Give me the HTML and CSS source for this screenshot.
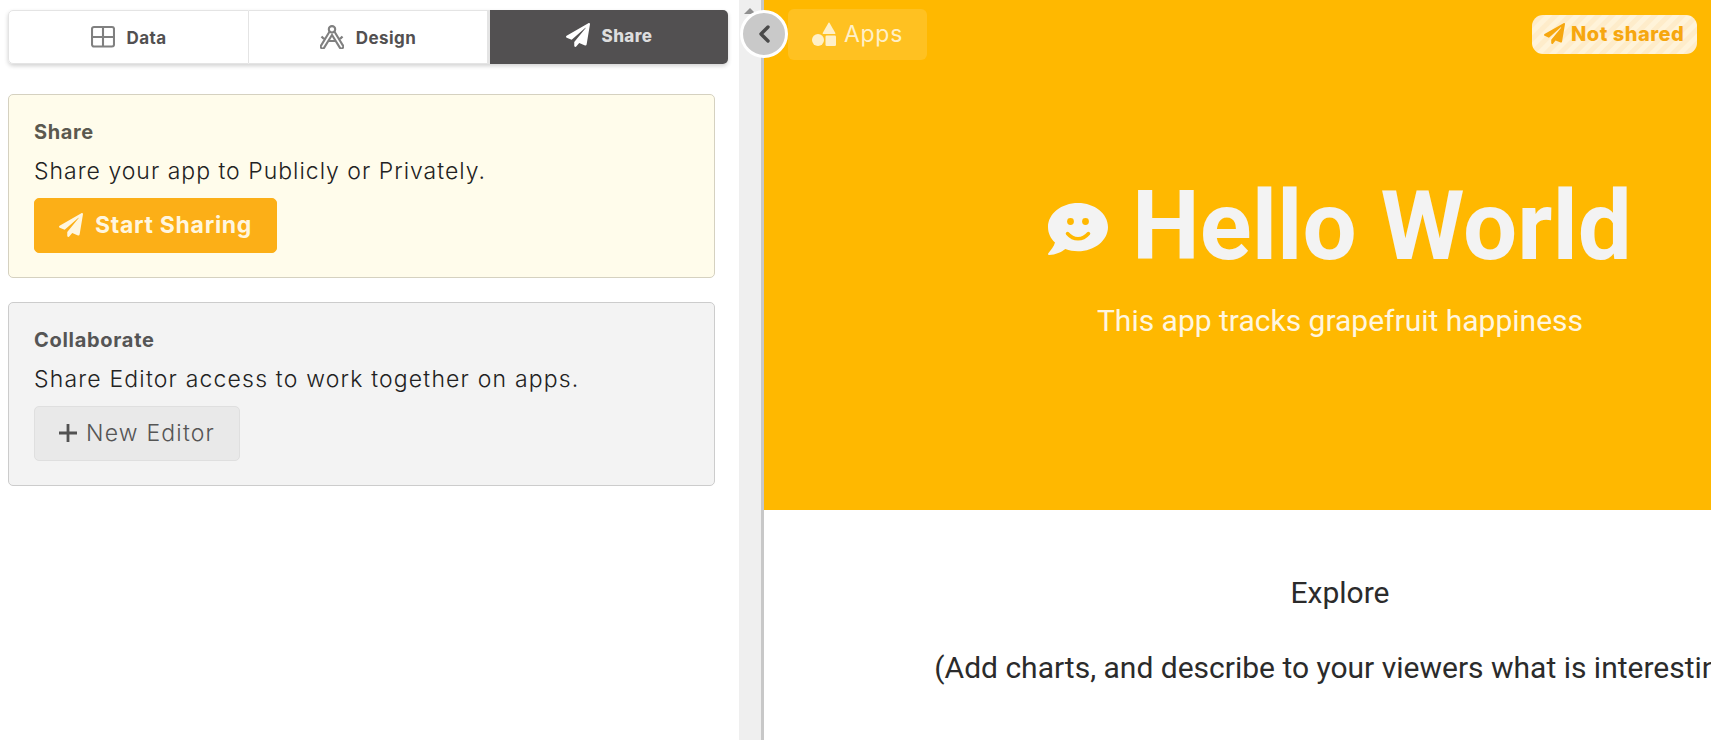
FILE: index.html
```
<!DOCTYPE html>
<html lang="en">
<head>
<meta charset="utf-8">
<title>Share</title>
<link rel="stylesheet" href="styles.css">
</head>
<body>
<svg class="defs" aria-hidden="true">
  <symbol id="plane" viewBox="0 0 512 512"><path d="M476 3.200L12.500 270.600c-18.100 10.400-15.800 35.600 2.200 43.200L121 358.400l287.300-253.200c5.500-4.900 13.300 2.600 8.600 8.300L176 407v80.500c0 23.600 28.500 32.900 42.500 15.800L282 426l124.600 52.200c14.200 6 30.400-2.900 33-18.200l72-432C515 7.800 493.300-6.800 476 3.200z"/></symbol>
</svg>
<div class="app">
  <section class="editor">
    <nav class="tabs">
      <a class="tab"><svg class="tab-icon" viewBox="0 0 24 24"><path class="line" d="M3 2h18a2 2 0 0 1 2 2v15.500a2 2 0 0 1-2 2H3a2 2 0 0 1-2-2V4a2 2 0 0 1 2-2zM12 2v19.500M1 12h22"/></svg><span>Data</span></a>
      <a class="tab tab-design"><svg class="tab-icon" viewBox="0 0 24 24"><g class="line"><circle cx="12" cy="4.300" r="3.200"/><path d="M9.600 6.500 1.200 20.300a1.800 1.800 0 0 0 .2 2.700 1.800 1.800 0 0 0 2.800-.4L12 10l7.800 12.600a1.800 1.800 0 0 0 2.800.4 1.800 1.800 0 0 0 .2-2.700L14.400 6.500M1.500 11.500q1.800 2.200 4 3.300M22.500 11.500q-1.800 2.200-4 3.300M8.800 16h6.400"/></g></svg><span>Design</span></a>
      <a class="tab tab-active"><svg class="tab-icon"><use href="#plane"/></svg><span>Share</span></a>
    </nav>
    <div class="card card-share">
      <h2>Share</h2>
      <p>Share your app to Publicly or Privately.</p>
      <button class="btn btn-primary"><svg class="btn-icon"><use href="#plane"/></svg>Start Sharing</button>
    </div>
    <div class="card">
      <h2>Collaborate</h2>
      <p>Share Editor access to work together on apps.</p>
      <button class="btn"><svg class="plus-icon" viewBox="0 0 18 18"><path d="M9 0v18M0 9h18"/></svg>New Editor</button>
    </div>
  </section>
  <div class="scrollbar"><svg class="scroll-arrow" viewBox="0 0 12 6"><path d="M6 0l6 6H0z"/></svg></div>
  <main class="preview">
    <button class="collapse"><svg viewBox="0 0 12 18"><path d="M10 2L3 9l7 7"/></svg></button>
    <a class="apps"><svg class="apps-icon" viewBox="0 0 24 24"><path d="M17.500.8 23.300 11a.7.700 0 0 1-.6 1H11.300a.7.700 0 0 1-.6-1L16.500.8a.6.600 0 0 1 1 0z"/><circle cx="6" cy="18" r="6"/><rect x="13.500" y="13.500" width="10.500" height="10.500" rx="1.300"/></svg>Apps</a>
    <div class="status"><svg class="status-icon"><use href="#plane"/></svg>Not shared</div>
    <div class="page">
      <header class="hero">
        <h1><svg class="smile" viewBox="0 0 60 52"><path class="bubble" d="M30 0c16.600 0 30 10.700 30 24S46.600 48.300 30 48.300c-4.500 0-8.800-.8-12.600-2.200C13.500 49 7.500 52 1.200 52c-1.200 0-1.500-1.200-.7-2.100 2.200-2.300 5.500-6.500 6.500-10.400C2.600 35.400 0 30 0 24 0 10.700 13.400 0 30 0z"/><g class="face"><circle cx="22.500" cy="18.500" r="3.400"/><circle cx="37.500" cy="18.500" r="3.400"/><path d="M19.500 30.500q4.500 5.300 10.500 5.300t10.500-5.300"/></g></svg><span>Hello World</span></h1>
        <p>This app tracks grapefruit happiness</p>
      </header>
      <div class="story">
        <p>Explore</p>
        <p>(Add charts, and describe to your viewers what is interesting)</p>
      </div>
    </div>
  </main>
</div>
</body>
</html>
```
FILE: styles.css
```
* { box-sizing: border-box; }
body { margin: 0; background: #fff; font-family: Inter, "Open Sans", sans-serif; overflow: hidden; }
h1, h2, p { margin: 0; }
.defs { position: absolute; width: 0; height: 0; }
svg { flex: none; display: block; }
.app { display: flex; height: 740px; }

.editor { width: 739px; flex: none; padding: 10px 11px 0 8px; }
.tabs { display: flex; height: 54px; border-radius: 5px; box-shadow: 0 2px 4px rgba(0,0,0,.18); margin-bottom: 30px; }
.tab { display: flex; align-items: center; justify-content: center; gap: 12px; width: 241px;
  border: 1px solid #e4e4e4; border-radius: 5px 0 0 5px; color: #525051; fill: #fff;
  font-size: 17px; line-height: 20px; font-weight: 700; letter-spacing: .4px; padding-top: 1px; }
.tab-icon { width: 24px; height: 24px; margin-top: -2px; }
.line { fill: none; stroke: #808080; stroke-width: 2.100; }
.tab-design { width: 241px; border-left: 0; border-right: 3px solid #e4e4e4; border-radius: 0; }
.tab-active { width: 238px; background: #525051; border: 0; border-radius: 0 5px 5px 0; color: #ddd; padding: 0 0 3px; font-weight: 800; }

.card { width: 707px; height: 184px; margin-bottom: 24px; padding: 25px 25px 24px; border: 1px solid #ccc; border-radius: 5px; background: #f3f3f3; }
.card-share { background: #fffceb; border-color: #d5d1c0; }
.card h2 { font-size: 20px; line-height: 25px; font-weight: 700; letter-spacing: .7px; color: #555; }
.card-share h2 { color: #5b594f; letter-spacing: .6px; }
.card p { margin: 10px 0 11px; font-size: 23px; line-height: 32px; font-weight: 300; letter-spacing: 1.180px; color: #222; }
.card-share p { letter-spacing: 1px; }
.btn { display: flex; align-items: center; width: 206px; height: 55px; padding: 0 0 2px 24px; border: 1px solid #dfdfdf; border-radius: 5px;
  background: #e9e9e9; color: #555; font: 300 23px/30px Inter, "Open Sans", sans-serif; letter-spacing: 1.200px; white-space: nowrap; }
.btn-primary { width: 243px; background: #fcaf17; border-color: #fcaf17; color: #fff6df; fill: #fff6df; font-weight: 700; letter-spacing: .7px; }
.btn-icon { width: 24px; height: 24px; margin-right: 12px; }
.plus-icon { width: 18px; height: 18px; margin-right: 9px; stroke: #525252; stroke-width: 2.800; }

.scrollbar { width: 22px; flex: none; background: #efefef; padding: 8px 5px; }
.scroll-arrow { width: 12px; height: 6px; fill: #909090; }

.preview { position: relative; flex: 1; min-width: 0; border-left: 3px solid #c8c8c8; }
.collapse { position: absolute; left: -24px; top: 10px; width: 48px; height: 48px; padding: 0 1px 0 0; display: flex; align-items: center; justify-content: center;
  border: 3px solid #fff; border-radius: 50%; background: #c9c9c9; }
.collapse svg { width: 12px; height: 18px; fill: none; stroke: #4a4a4a; stroke-width: 3.400; stroke-linecap: round; stroke-linejoin: round; }
.apps { position: absolute; left: 24px; top: 9px; width: 139px; height: 51px; padding: 0 0 2px 24px; display: flex; align-items: center; gap: 8px;
  border-radius: 6px; background: rgba(255,255,255,.13); color: #fff0c8; fill: #fff0c8; font-size: 23px; letter-spacing: .7px; }
.apps-icon { width: 24px; height: 24px; }
.status { position: absolute; left: 768px; top: 15px; width: 165px; height: 39px; padding: 0 0 2px 12px; display: flex; align-items: center; gap: 6px;
  border-radius: 11px; background: repeating-linear-gradient(135deg, #fff3d9 0 4px, #feecca 5px 9px, #fff3d9 10px);
  color: #f6a70f; fill: #f6a70f; font-size: 20px; font-weight: 800; letter-spacing: .5px; white-space: nowrap; }
.status-icon { width: 21px; height: 21px; }

.page { height: 740px; overflow: hidden; display: grid; grid-template-columns: 1152px; grid-template-rows: 510px 230px; font-family: Roboto, sans-serif; text-align: center; }
.hero { background: #ffb800; color: #f3f3f3; padding-top: 170px; }
.hero h1 { display: flex; justify-content: center; align-items: center; gap: 24px; font-size: 96px; line-height: 113px; font-weight: 700; white-space: nowrap; }
.smile { width: 60px; height: 52px; margin-top: 5px; }
.bubble { fill: #f3f3f3; }
.face { fill: #ffb800; }
.face path { fill: none; stroke: #ffb800; stroke-width: 3.500; stroke-linecap: round; }
.hero p { margin-top: 20px; font-size: 30px; line-height: 35px; color: #fff6e0; }
.story { padding-top: 65px; color: #2b2b2b; font-size: 30px; line-height: 35px; }
.story p { margin-bottom: 40px; }
```
